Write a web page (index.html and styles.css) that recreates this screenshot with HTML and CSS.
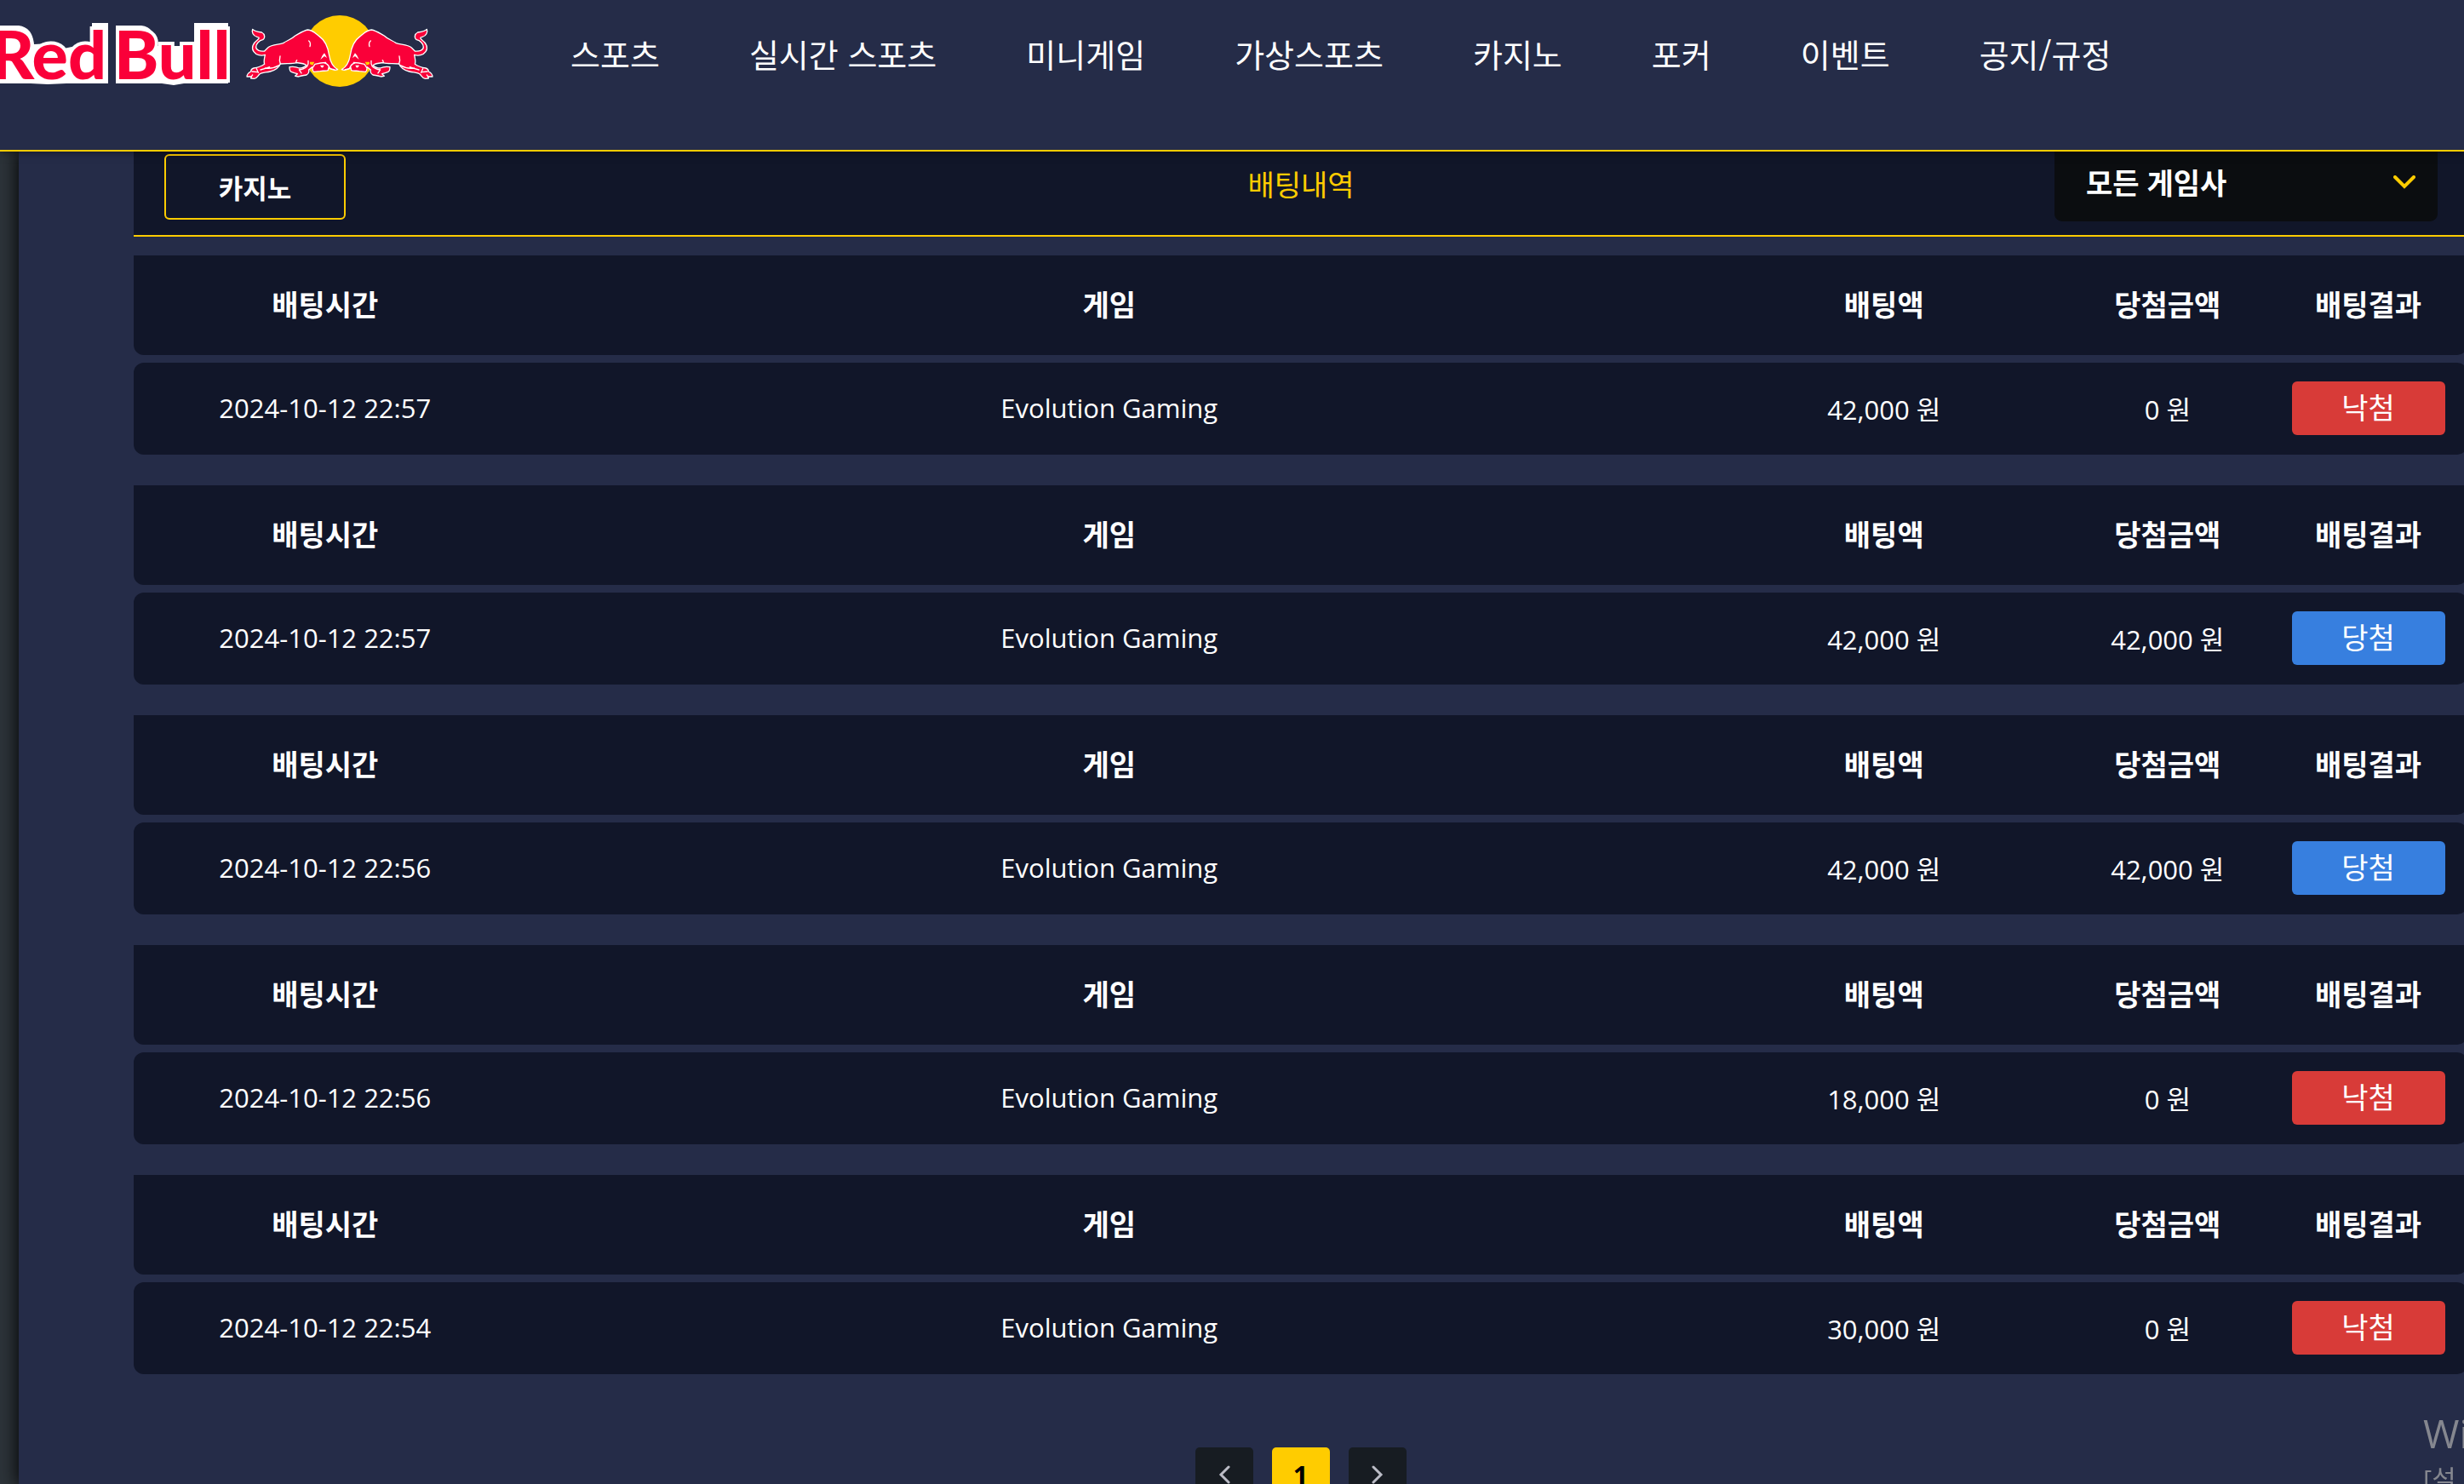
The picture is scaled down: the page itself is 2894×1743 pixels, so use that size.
FILE: index.html
```html
<!DOCTYPE html>
<html lang="ko">
<head>
    <meta charset="UTF-8">
    <meta name="viewport" content="width=device-width, initial-scale=1.0">
    <title>배팅내역</title>
    <link rel="stylesheet" href="styles.css">
</head>
<body>
    <header class="header">
        <a href="#" class="logo" aria-label="Red Bull">
            <svg width="512" height="115" viewBox="0 0 512 115">
                <!-- white backing behind the letters -->
                <path fill="#fff" d="M0 30h22q16 2 18 22l18-1 17 6 33-7V27h19v71H78l-22 1-20-1H0zM136 30h30q17 2 17 24h45V27h40v71h-52l-12 2-14-2h-54z"/>
                <text class="logo-text" x="-11" y="93">Red</text>
                <text class="logo-text" x="134" y="93">Bull</text>
                <g transform="translate(280 10) scale(.3333)">
                    <circle cx="357" cy="150" r="126" fill="#ffcc00"/>
                    <g id="bull" stroke-linejoin="round" stroke-linecap="round">
                        <path fill="#fa0039" stroke="#fff" stroke-width="4" d="M50 73C56 80 68 82 82 84C94 90 95 104 86 110C74 112 62 124 62 136C62 148 78 152 92 150L104 138C118 126 145 128 158 122C172 112 188 108 200 96C215 88 228 78 245 75C262 76 272 88 285 98C305 112 316 138 320 165C324 190 334 206 350 215C340 219 328 216 318 208L316 218C306 222 296 218 288 221L266 223C260 220 262 212 260 206L248 216C250 224 246 230 240 234C230 236 220 236 212 240L200 238L208 230C200 228 194 226 188 224C182 222 180 214 180 206C192 204 206 206 214 210C228 210 236 204 240 200C230 192 215 192 204 191C186 196 168 192 148 195C142 210 128 218 112 222C96 226 82 224 74 232C68 238 66 246 56 247L44 246L46 240L30 240C30 232 36 226 44 222C44 216 48 212 54 210C70 208 78 206 92 196C88 186 92 176 94 163C80 168 62 164 54 152C44 138 52 122 66 112C74 104 76 102 66 100C52 96 46 84 50 73Z"/>
                        <path fill="#ffcc00" d="M252 188l16 0-6 12-10-4z"/>
                        <path fill="#fff" d="M289 180q6-16 14-23 4 6 9 17l-9-6zM288 200l14 0-4 8q-6 2-10-8z"/>
                        <path fill="none" stroke="#fff" stroke-width="4" d="M248 114Q256 120 252 134M147 168Q143 182 148 195M204 191Q202 186 206 182M246 184Q248 196 242 204Q232 214 214 216L222 228M262 208L270 196L290 192M304 192Q318 196 322 212L338 215M290 192L308 190M94 210Q120 214 144 200M78 216Q96 212 110 206M48 222L66 224M64 212L70 226M50 234L46 240"/>
                    </g>
                    <use href="#bull" transform="translate(714 0) scale(-1 1)"/>
                </g>
            </svg>
        </a>
        <nav class="menu">
            <a href="#">스포츠</a>
            <a href="#">실시간 스포츠</a>
            <a href="#">미니게임</a>
            <a href="#">가상스포츠</a>
            <a href="#">카지노</a>
            <a href="#">포커</a>
            <a href="#">이벤트</a>
            <a href="#">공지/규정</a>
        </nav>
    </header>

    <main class="panel">
        <div class="content">
            <div class="title-bar">
                <button type="button" class="category">카지노</button>
                <h1>배팅내역</h1>
                <div class="vendor">
                    <select aria-label="게임사">
                        <option>모든 게임사</option>
                    </select>
                    <svg width="26" height="16" viewBox="0 0 26 16"><path d="M2 2l11 11L24 2"/></svg>
                </div>
            </div>

            <table class="bet">
                <thead>
                    <tr><th class="time">배팅시간</th><th>게임</th><th class="amount">배팅액</th><th class="prize">당첨금액</th><th class="result">배팅결과</th></tr>
                </thead>
                <tbody>
                    <tr><td>2024-10-12 22:57</td><td>Evolution Gaming</td><td>42,000 원</td><td>0 원</td><td><span class="badge lose">낙첨</span></td></tr>
                </tbody>
            </table>

            <table class="bet">
                <thead>
                    <tr><th class="time">배팅시간</th><th>게임</th><th class="amount">배팅액</th><th class="prize">당첨금액</th><th class="result">배팅결과</th></tr>
                </thead>
                <tbody>
                    <tr><td>2024-10-12 22:57</td><td>Evolution Gaming</td><td>42,000 원</td><td>42,000 원</td><td><span class="badge win">당첨</span></td></tr>
                </tbody>
            </table>

            <table class="bet">
                <thead>
                    <tr><th class="time">배팅시간</th><th>게임</th><th class="amount">배팅액</th><th class="prize">당첨금액</th><th class="result">배팅결과</th></tr>
                </thead>
                <tbody>
                    <tr><td>2024-10-12 22:56</td><td>Evolution Gaming</td><td>42,000 원</td><td>42,000 원</td><td><span class="badge win">당첨</span></td></tr>
                </tbody>
            </table>

            <table class="bet">
                <thead>
                    <tr><th class="time">배팅시간</th><th>게임</th><th class="amount">배팅액</th><th class="prize">당첨금액</th><th class="result">배팅결과</th></tr>
                </thead>
                <tbody>
                    <tr><td>2024-10-12 22:56</td><td>Evolution Gaming</td><td>18,000 원</td><td>0 원</td><td><span class="badge lose">낙첨</span></td></tr>
                </tbody>
            </table>

            <table class="bet">
                <thead>
                    <tr><th class="time">배팅시간</th><th>게임</th><th class="amount">배팅액</th><th class="prize">당첨금액</th><th class="result">배팅결과</th></tr>
                </thead>
                <tbody>
                    <tr><td>2024-10-12 22:54</td><td>Evolution Gaming</td><td>30,000 원</td><td>0 원</td><td><span class="badge lose">낙첨</span></td></tr>
                </tbody>
            </table>

            <div class="pagination">
                <button type="button" aria-label="이전"><svg width="14" height="22" viewBox="0 0 14 22"><path d="M12 2L3 11l9 9"/></svg></button>
                <button type="button" class="current">1</button>
                <button type="button" aria-label="다음"><svg width="14" height="22" viewBox="0 0 14 22"><path d="M2 2l9 9-9 9"/></svg></button>
            </div>
        </div>
    </main>

    <div class="watermark">
        <p class="watermark-title">Wi</p>
        <p>[설</p>
    </div>
</body>
</html>
```
FILE: styles.css
```css
/* General */
* {
    box-sizing: border-box;
}

body {
    margin: 0;
    height: 100vh;
    display: flex;
    flex-direction: column;
    overflow: hidden;
    background: #2d343a;
    color: #fff;
    font-family: "Open Sans", "Noto Sans CJK KR", sans-serif;
    font-size: 31px;
}

button, select {
    font-family: inherit;
    color: inherit;
    border: none;
    cursor: pointer;
}

/* Header */
.header {
    position: relative;
    z-index: 1;
    flex: none;
    display: flex;
    align-items: flex-start;
    height: 178px;
    background: #252c48;
    border-bottom: 2px solid #ffcc00;
    box-shadow: 0 0 10px rgba(0, 0, 0, 0.5);
}

.logo svg {
    display: block;
}

.logo-text {
    font-family: Lato, sans-serif;
    font-size: 79px;
    font-weight: 900;
    fill: #fa0039;
    stroke: #fff;
    stroke-width: 8px;
    paint-order: stroke;
}

.menu {
    display: flex;
    gap: 105px;
    padding: 39px 0 0 158px;
}

.menu a {
    color: #fff;
    font-family: "Noto Sans CJK KR", sans-serif;
    font-size: 38px;
    line-height: 48px;
    text-decoration: none;
    white-space: nowrap;
}

/* Panel */
.panel {
    flex: 1;
    min-height: 0;
    margin-left: 22px;
    padding-left: 135px;
    background: #252c48;
    box-shadow: 0 0 20px 2px rgba(0, 0, 0, 0.9);
}

.content {
    margin-right: -4px;
}

.title-bar {
    display: grid;
    grid-template-columns: 1fr auto 1fr;
    align-items: center;
    padding: 0 35px 16px 36px;
    background: #111629;
    border-bottom: 2px solid #ffcc00;
    margin-bottom: 13px;
}

.category {
    width: 213px;
    height: 77px;
    background: none;
    border: 2px solid #ffcc00;
    border-radius: 6px;
    font-size: 31px;
    font-weight: bold;
}

.title-bar h1 {
    margin: 0;
    padding-bottom: 4px;
    color: #ffcc00;
    font-size: 34px;
    line-height: 48px;
    font-weight: normal;
}

.vendor {
    position: relative;
    justify-self: end;
}

.vendor select {
    display: block;
    appearance: none;
    width: 450px;
    height: 82px;
    padding: 0 37px 8px;
    background: #0b0d10;
    border-radius: 0 0 9px 9px;
    font-size: 34px;
    font-weight: bold;
}

.vendor svg {
    position: absolute;
    right: 26px;
    top: 28px;
    fill: none;
    stroke: #ffcc00;
    stroke-width: 4px;
    stroke-linecap: round;
    pointer-events: none;
}

/* Bet tables */
.bet {
    width: 100%;
    table-layout: fixed;
    border-collapse: separate;
    border-spacing: 0 9px;
    margin-bottom: 18px;
    text-align: center;
}

.bet th,
.bet td {
    padding: 0;
    background: #111629;
}

.bet th {
    height: 117px;
    padding-bottom: 4px;
    font-size: 34px;
}

.bet td {
    height: 108px;
    padding-bottom: 2px;
}

.bet th:first-child {
    border-radius: 0 0 0 12px;
}

.bet th:last-child {
    border-radius: 0 0 12px 0;
}

.bet td:first-child {
    border-radius: 12px 0 0 12px;
}

.bet td:last-child {
    border-radius: 0 12px 12px 0;
}

.time {
    width: 16.4%;
}

.amount {
    width: 15.6%;
}

.prize {
    width: 8.7%;
}

.result {
    width: 8.5%;
}

.badge {
    display: block;
    width: 180px;
    margin: 0 auto;
    border-radius: 6px;
    font-size: 34px;
    line-height: 63px;
}

.lose {
    background: #d83b38;
}

.win {
    background: #377fdf;
}

/* Pagination */
.pagination {
    display: flex;
    justify-content: center;
    gap: 22px;
    padding-top: 59px;
}

.pagination button {
    display: flex;
    align-items: center;
    justify-content: center;
    width: 68px;
    height: 64px;
    padding: 0;
    background: #171c22;
    border-radius: 5px;
}

.pagination .current {
    background: #ffcc00;
    color: #000;
    font-size: 31px;
    font-weight: bold;
}

.pagination svg {
    fill: none;
    stroke: #bbbcc6;
    stroke-width: 3px;
    stroke-linecap: round;
}

/* Watermark in the bottom corner */
.watermark {
    position: fixed;
    right: 0;
    bottom: 0;
    width: 48px;
    height: 90px;
    overflow: hidden;
    color: #85878f;
    white-space: nowrap;
}

.watermark p {
    margin: 0;
    line-height: 48px;
}

.watermark .watermark-title {
    font-size: 46px;
    line-height: 60px;
}
```
